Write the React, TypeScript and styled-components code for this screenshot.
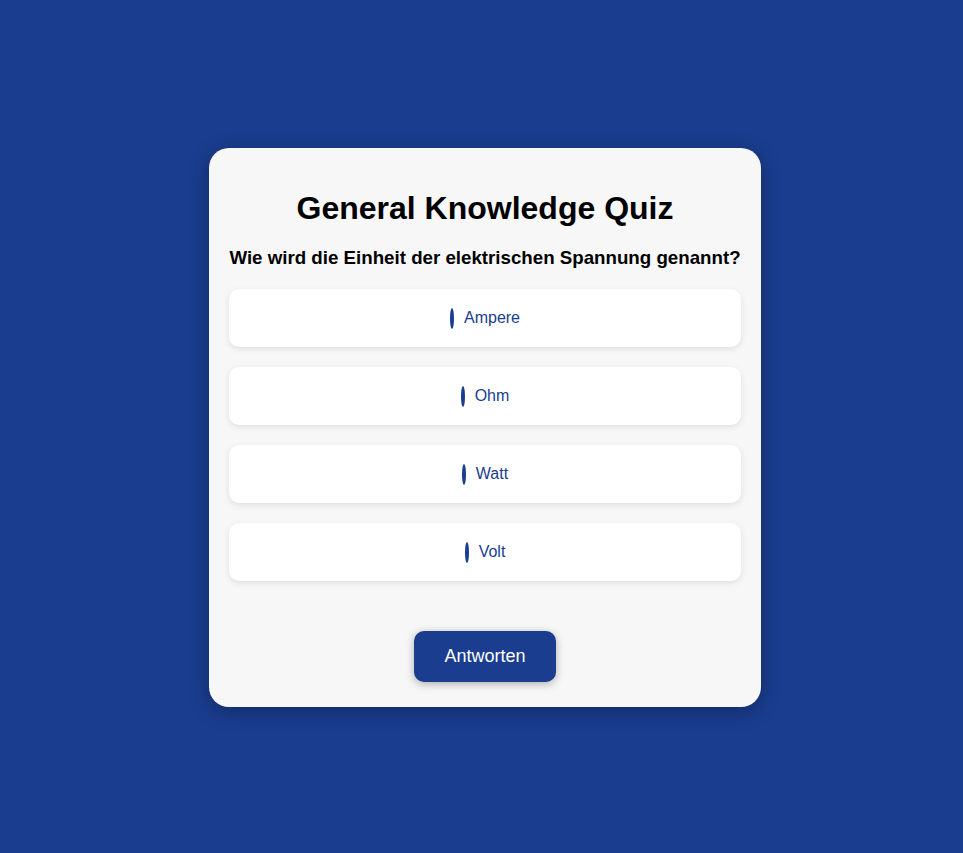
import React, { useState } from "react";
import styled, { createGlobalStyle } from "styled-components";

const Global = createGlobalStyle`
  html, body { margin: 0; padding: 0; }
  body {
    background: #1a3d8f;
    font-family: "Liberation Sans", Arial, sans-serif;
  }
`;

const Page = styled.div`
  min-height: 853px;
  display: flex;
  align-items: center;
  justify-content: center;
  padding: 2px 0 0 7px;
  box-sizing: border-box;
`;

const Card = styled.div`
  width: 552px;
  box-sizing: border-box;
  background: #f7f7f7;
  border-radius: 20px;
  padding: 20px 20px 25px;
  box-shadow: 0 4px 20px rgba(0, 0, 0, 0.3);
  display: flex;
  flex-direction: column;
  align-items: stretch;
  text-align: center;
`;

const Title = styled.h1`
  font-size: 32px;
  font-weight: bold;
  color: #000;
  margin: 22px 0 20px;
  line-height: 37px;
`;

const Question = styled.h3`
  font-size: 18.72px;
  font-weight: bold;
  color: #000;
  margin: 0 0 20px;
  line-height: 22px;
`;

const Options = styled.div`
  display: flex;
  flex-direction: column;
  gap: 20px;
  margin-bottom: 50px;
`;

const Option = styled.label`
  height: 58px;
  display: flex;
  align-items: center;
  justify-content: center;
  gap: 10px;
  background: #fff;
  border-radius: 10px;
  box-shadow: 0 2px 6px rgba(0, 0, 0, 0.1);
  color: #1a3d8f;
  font-size: 16px;
  cursor: pointer;
`;

const Radio = styled.span<{ $checked: boolean }>`
  width: 4px;
  height: 21px;
  border-radius: 50%;
  background: ${(p) => (p.$checked ? "#0b2a70" : "#1a3d8f")};
  flex-shrink: 0;
`;

const Button = styled.button`
  align-self: center;
  background: #1a3d8f;
  color: #fff;
  border: none;
  border-radius: 10px;
  padding: 15px 30px;
  font-family: "Liberation Sans", Arial, sans-serif;
  font-size: 18px;
  line-height: 21px;
  box-shadow: 0 2px 8px rgba(0, 0, 0, 0.3);
  cursor: pointer;
`;

const answers = ["Ampere", "Ohm", "Watt", "Volt"];

export default function App() {
  const [sel, setSel] = useState<number | null>(null);
  return (
    <>
      <Global />
      <Page>
        <Card>
          <Title>General Knowledge Quiz</Title>
          <Question>Wie wird die Einheit der elektrischen Spannung genannt?</Question>
          <Options>
            {answers.map((a, i) => (
              <Option key={a} onClick={() => setSel(i)}>
                <Radio $checked={sel === i} />
                {a}
              </Option>
            ))}
          </Options>
          <Button>Antworten</Button>
        </Card>
      </Page>
    </>
  );
}
